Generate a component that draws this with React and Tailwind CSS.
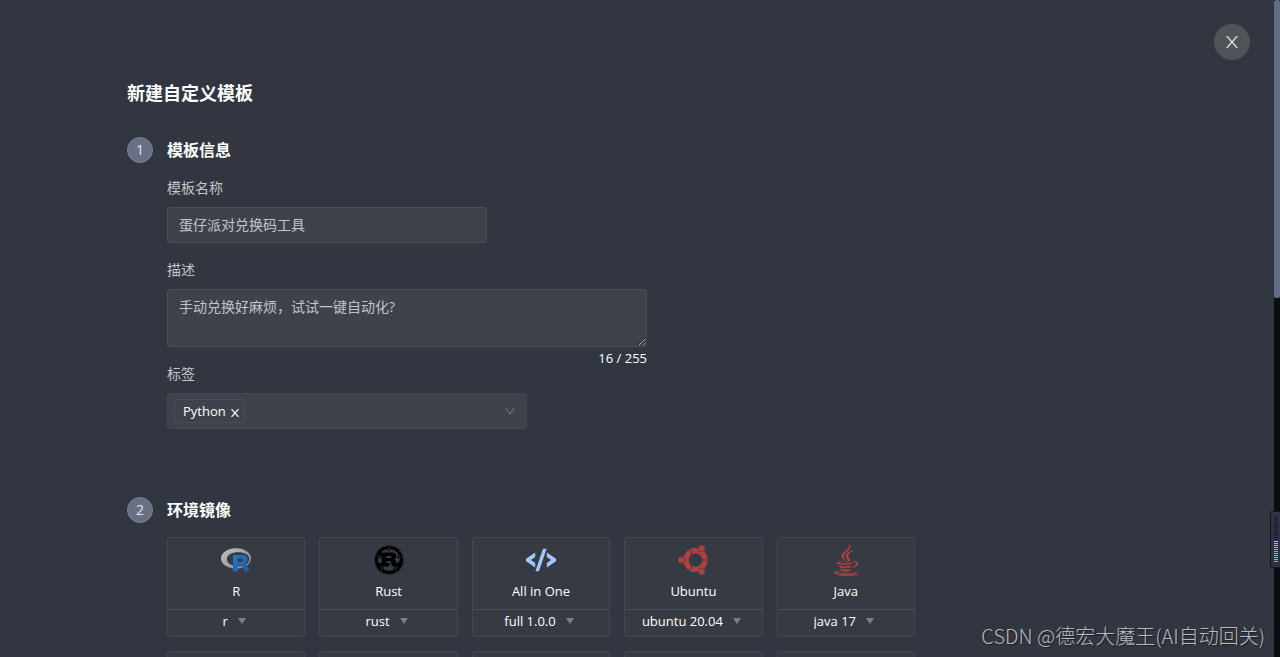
import { useState } from "react";
import { FaJava } from "react-icons/fa";
import { SiRust } from "react-icons/si";

function RLogo() {
  return (
    <svg viewBox="0 0 30 24" className="h-6 w-[30px]" aria-hidden="true">
      <defs>
        <linearGradient id="r-ring" x1="0" y1="0" x2="1" y2="1">
          <stop offset="0" stopColor="#c4c5c8" />
          <stop offset="1" stopColor="#7e8188" />
        </linearGradient>
        <linearGradient id="r-letter" x1="0" y1="0" x2="1" y2="1">
          <stop offset="0" stopColor="#2b72cb" />
          <stop offset="1" stopColor="#1d5cae" />
        </linearGradient>
      </defs>
      <path
        fill="url(#r-ring)"
        fillRule="evenodd"
        d="M15 .3C6.7.3 0 4.800 0 10.400S6.700 20.500 15 20.500 30 16 30 10.400 23.300.3 15 .3zm2.300 4C23.600 4.300 28.200 6.500 28.200 11s-4.600 7.300-10.900 7.300S5.900 15.200 5.900 11 11 4.300 17.300 4.300z"
      />
      <path
        fill="url(#r-letter)"
        fillRule="evenodd"
        d="M12 7h9.500c3.200 0 5.200 1.600 5.200 4.400 0 2.200-1.200 3.600-2.800 4.200.7.300 1.300.9 1.800 1.800L29 23.600h-5.300l-2.600-5c-.5-.9-.9-1.200-1.800-1.200h-2.600v6.200H12zm4.700 3.500v3.300h3.400c1.200 0 1.900-.6 1.900-1.700s-.7-1.600-1.900-1.600z"
      />
    </svg>
  );
}

function CodeLogo() {
  return (
    <svg viewBox="0 0 30 24" className="h-6 w-[30px]" fill="#a3c6fb" aria-hidden="true">
      <path d="M9.200 4.600v4.300L4.900 12l4.300 3.100v4.300L0 13.200v-2.400zM20.800 4.600v4.300l4.300 3.100-4.300 3.100v4.300l9.200-6.200v-2.400zM17 .8h3.600l-7.600 22.400H9.400z" />
    </svg>
  );
}

function UbuntuLogo() {
  return (
    <svg viewBox="0 0 30 30" className="size-[30px]" aria-hidden="true">
      <circle cx="17.500" cy="15" r="9.500" fill="none" stroke="#ad4141" strokeWidth="5.400" />
      <g stroke="#363a42" strokeWidth="1">
        <path d="M17.500 15H30" />
        <path d="M17.500 15 11.300 4.300" />
        <path d="M17.500 15 11.300 25.700" />
      </g>
      <g fill="#ad4141" stroke="#363a42" strokeWidth=".6">
        <circle cx="3.300" cy="15" r="3.500" />
        <circle cx="23.700" cy="3.500" r="3.500" />
        <circle cx="23.700" cy="26.500" r="3.500" />
      </g>
    </svg>
  );
}

const images = [
  { name: "R", version: "r", logo: <RLogo /> },
  { name: "Rust", version: "rust", logo: <SiRust className="size-[30px] text-black" /> },
  { name: "All in One", version: "full 1.0.0", logo: <CodeLogo /> },
  { name: "Ubuntu", version: "ubuntu 20.04", logo: <UbuntuLogo /> },
  { name: "Java", version: "java 17", logo: <FaJava className="size-8 text-[#b34040]" strokeWidth={10} /> },
];

function Section({ step, title, children }) {
  return (
    <section className="flex gap-[14px]">
      <span className="flex size-[26px] shrink-0 items-center justify-center rounded-full border border-[#7b8393] bg-[#687084] text-sm text-[#e6e8ec]">
        {step}
      </span>
      <div className="min-w-0 flex-1">
        <h2 className="mb-[14px] text-base leading-[26px] font-bold text-white">{title}</h2>
        {children}
      </div>
    </section>
  );
}

function ImageCard({ image }) {
  return (
    <div className="flex h-[100px] flex-col rounded-[3px] border border-[#444751] bg-[#363a42] text-white">
      <div className="flex h-[72px] flex-col items-center border-b border-[#4a4d57] pt-1.5">
        <div className="flex h-8 items-center">{image.logo}</div>
        <div className="mt-[5px] text-[13px] leading-5">{image.name}</div>
      </div>
      <div className="flex h-[22px] items-center justify-center gap-2.5 pr-1">
        <select aria-label={image.name} className="field-sizing-content appearance-none bg-transparent text-[13px] leading-5 outline-none">
          <option>{image.version}</option>
        </select>
        <svg viewBox="0 0 8 6" className="h-1.5 w-2" fill="#7c7f85" aria-hidden="true">
          <path d="M0 0h8L4 6z" />
        </svg>
      </div>
    </div>
  );
}

function SideMeter() {
  const off = Array.from({ length: 12 });
  const on = Array.from({ length: 11 });
  return (
    <div className="absolute top-[511px] right-0 flex h-[57px] w-[10px] flex-col gap-px rounded-l-[3px] border border-r-0 border-[#14161f] bg-[#2e3344] pt-[5px] pl-[3px]">
      {off.map((_, i) => (
        <span key={i} className="h-px w-1 shrink-0 bg-[#1a1d27]" />
      ))}
      {on.map((_, i) => (
        <span key={i} className="h-px w-1 shrink-0" style={{ background: `hsl(${75 + i * 9} 55% 60%)` }} />
      ))}
    </div>
  );
}

export default function App() {
  const [name, setName] = useState("蛋仔派对兑换码工具");
  const [desc, setDesc] = useState("手动兑换好麻烦，试试一键自动化?");
  const [tags, setTags] = useState(["Python"]);

  return (
    <div className="relative flex h-screen overflow-hidden bg-[#323640] font-['Open_Sans','Noto_Sans_CJK_SC',sans-serif] text-[13px] text-white">
      <main className="min-w-0 flex-1 overflow-hidden pt-20 pr-20 pl-[127px]">
        <h1 className="mb-[31px] text-lg leading-[26px] font-bold">新建自定义模板</h1>

        <div className="flex flex-col gap-[68px]">
          <Section step={1} title="模板信息">
            <label htmlFor="tpl-name" className="mb-2 block text-sm leading-[22px] text-[#c2c4c8]">模板名称</label>
            <input
              id="tpl-name"
              type="text"
              value={name}
              onChange={(e) => setName(e.target.value)}
              className="block h-9 w-full max-w-[320px] rounded-[3px] border border-[#4a4d57] bg-[#3e424b] px-[11px] pb-0.5 text-sm text-[#c2c4c8] outline-none"
            />

            <label htmlFor="tpl-desc" className="mt-4 mb-2 block text-sm leading-[22px] text-[#c2c4c8]">描述</label>
            <div className="max-w-[480px]">
              <textarea
                id="tpl-desc"
                value={desc}
                maxLength={255}
                onChange={(e) => setDesc(e.target.value)}
                className="block h-[58px] w-full resize-y rounded-[3px] border border-[#4a4d57] bg-[#3e424b] px-[11px] py-1.5 text-sm leading-[22px] text-[#c2c4c8] outline-none"
              />
              <div className="h-4 text-right leading-[22px]">{desc.length} / 255</div>
            </div>

            <label htmlFor="tpl-tags" className="mb-2 block text-sm leading-[22px] text-[#c2c4c8]">标签</label>
            <div className="flex h-9 max-w-[360px] items-center rounded-[3px] border border-[#444751] bg-[#3e424b] pr-[11px] pl-1.5">
              {tags.map((tag) => (
                <span key={tag} className="flex h-6 items-center gap-[5px] rounded-[3px] border border-[#4a4d57] pt-px pr-[5px] pl-2">
                  {tag}
                  <button type="button" aria-label={`移除 ${tag}`} onClick={() => setTags(tags.filter((t) => t !== tag))}>
                    <svg viewBox="0 0 8 8" className="mt-0.5 size-2" stroke="#e6e8ec" strokeWidth="1.300" aria-hidden="true">
                      <path d="M.5 0l7 8M7.500 0l-7 8" />
                    </svg>
                  </button>
                </span>
              ))}
              <select id="tpl-tags" className="h-full min-w-0 flex-1 appearance-none bg-transparent outline-none" />
              <svg viewBox="0 0 10 8" className="h-2 w-2.5 shrink-0" fill="none" stroke="#7c7f88" aria-hidden="true">
                <path d="M.4.5 5 7 9.600.5" />
              </svg>
            </div>
          </Section>

          <Section step={2} title="环境镜像">
            <div className="grid max-w-[748px] grid-cols-5 gap-[14px]">
              {images.map((image) => (
                <ImageCard key={image.name} image={image} />
              ))}
              {images.map((image) => (
                <div key={image.name} className="h-[100px] rounded-[3px] border border-[#444751] bg-[#363a42]" />
              ))}
            </div>
          </Section>
        </div>
      </main>

      <div className="w-1.5 shrink-0 bg-[#0b0d12]">
        <div className="h-[298px] rounded-[2px] bg-[#616d82]" />
      </div>

      <button
        type="button"
        aria-label="关闭"
        className="absolute top-6 right-[30px] flex size-9 items-center justify-center rounded-full bg-[#505459]"
      >
        <svg viewBox="0 0 12 12" className="size-3" stroke="#dcdde0" strokeWidth="1.400" aria-hidden="true">
          <path d="M.8 0l10.400 12M11.200 0L.8 12" />
        </svg>
      </button>

      <SideMeter />

      <div className="absolute right-[15px] bottom-1.5 font-['Noto_Sans_CJK_SC',sans-serif] text-xl leading-[30px] font-light text-[#b9babd] [text-shadow:1px_1px_1px_#1c1e24]">
        CSDN @德宏大魔王(AI自动回关)
      </div>
    </div>
  );
}
